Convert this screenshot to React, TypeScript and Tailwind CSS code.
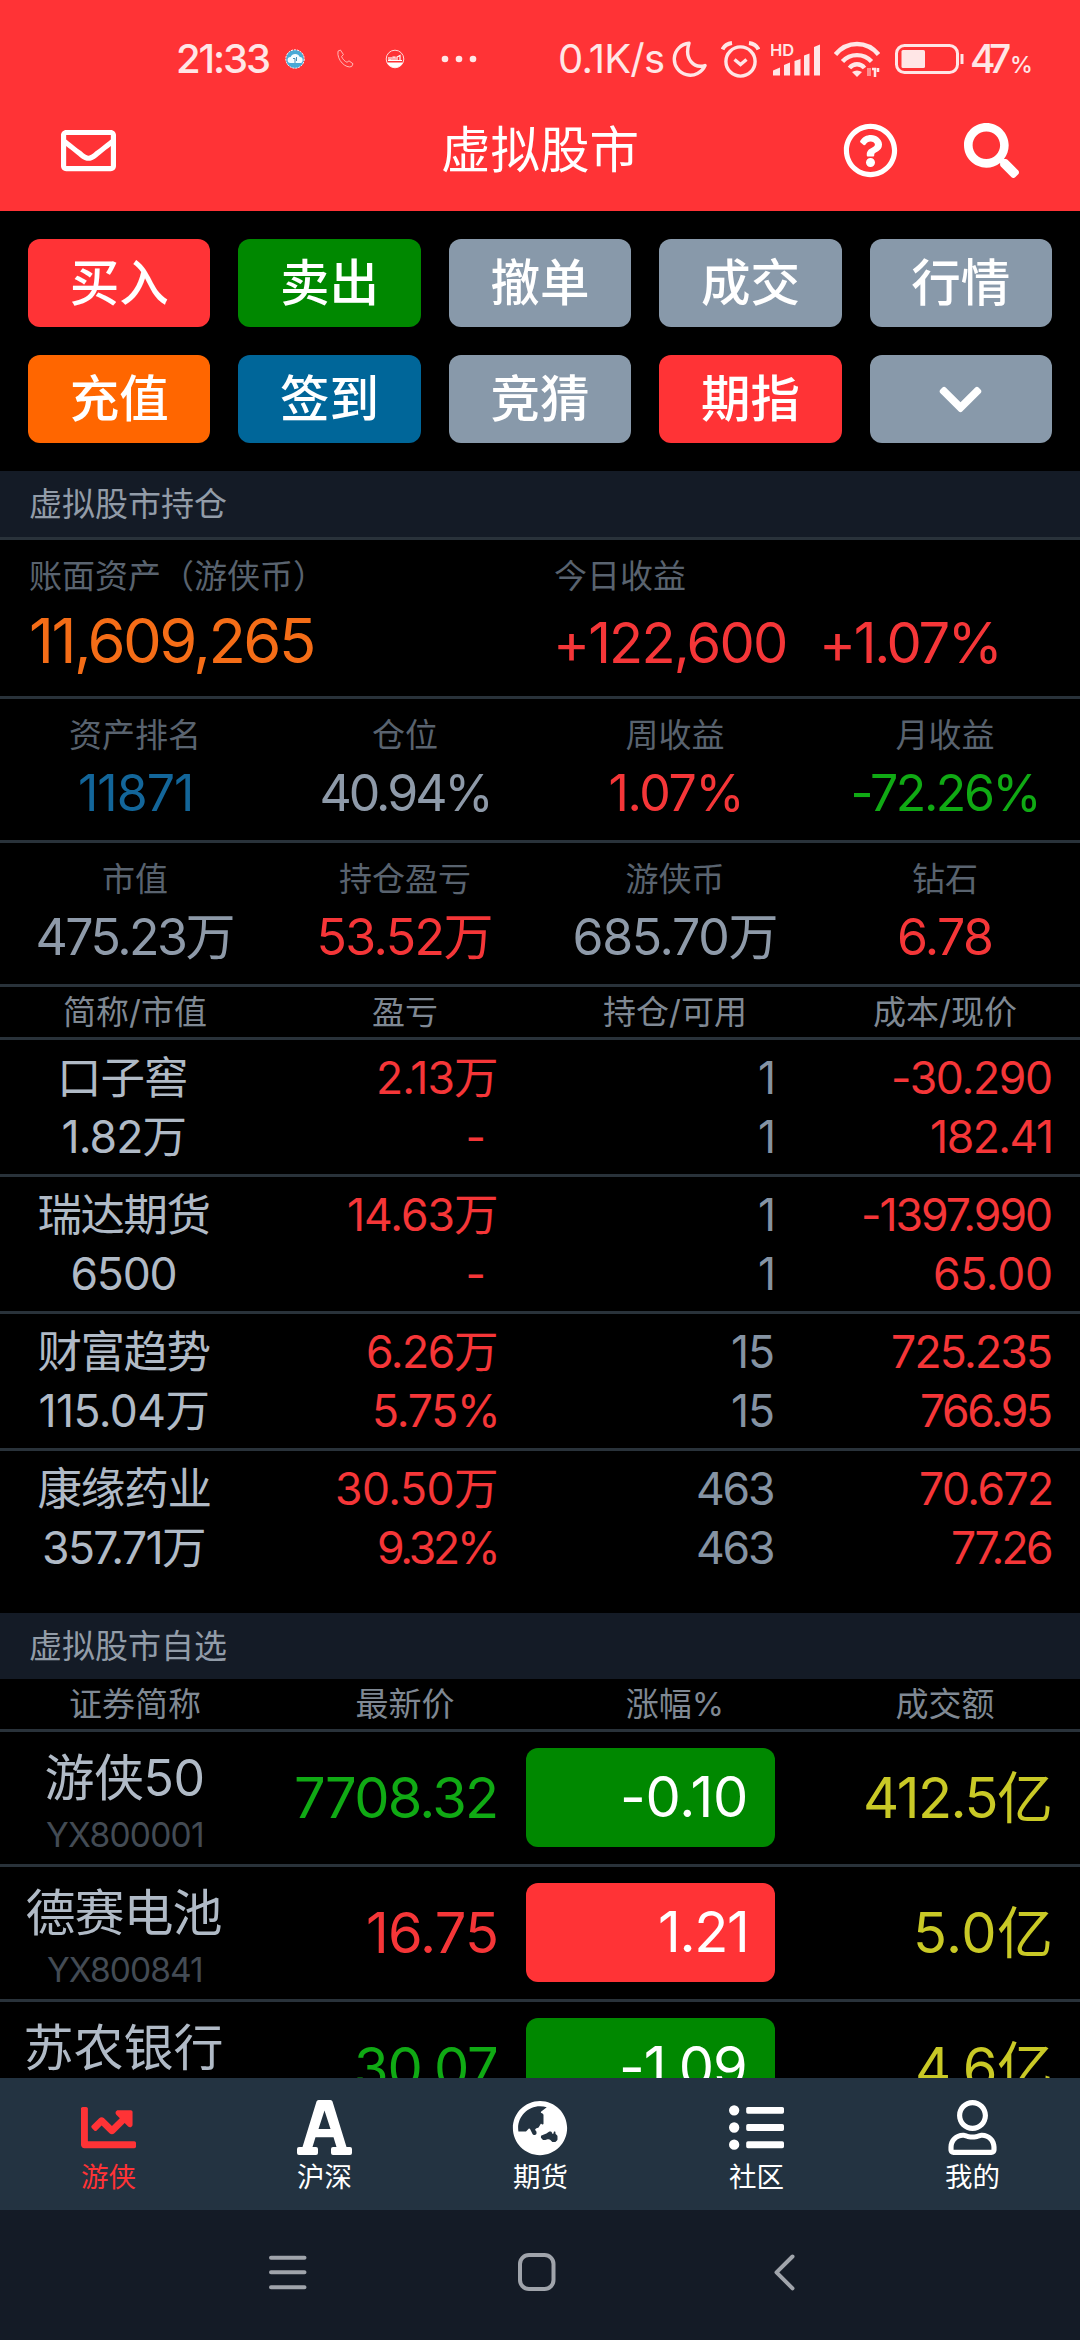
import { useLayoutEffect, useRef, useState, type CSSProperties, type ReactNode } from 'react';
import {
  FaChartLine,
  FaChevronDown,
  FaGlobeAsia,
  FaListUl,
  FaRegEnvelope,
  FaRegQuestionCircle,
  FaRegUser,
  FaSearch,
} from 'react-icons/fa';

/** Text whose tracking is adjusted so that its visible ink spans exactly `w` pixels. */
function Fit({ w, children, className = '' }: { w: number; children: string; className?: string }) {
  const ref = useRef<HTMLSpanElement>(null);
  const [style, setStyle] = useState<CSSProperties>({ letterSpacing: 0.01 });
  useLayoutEffect(() => {
    const el = ref.current;
    const ctx = document.createElement('canvas').getContext('2d');
    if (!el || !ctx) return;
    const cs = getComputedStyle(el);
    ctx.font = `${cs.fontWeight} ${cs.fontSize} ${cs.fontFamily}`;
    const m = ctx.measureText(children);
    const left = -m.actualBoundingBoxLeft;
    const right = m.width - m.actualBoundingBoxRight;
    const advance = el.getBoundingClientRect().width;
    const gap = children.length > 1 ? (w - (advance - left - right)) / (children.length - 1) : 0;
    setStyle({ letterSpacing: gap, marginLeft: -left, marginRight: -right - gap });
  }, [children, w]);
  return (
    <span ref={ref} style={style} className={`inline-block shrink-0 whitespace-nowrap ${className}`}>
      {children}
    </span>
  );
}

const RED = 'text-[#f53638]';
const GREEN = 'text-[#10aa14]';
const GRAY = 'text-[#8e9aa9]';

type Cell = [text: string, width: number];

const actions: { label?: string; bg: string }[] = [
  { label: '买入', bg: 'bg-[#ff3336]' },
  { label: '卖出', bg: 'bg-[#008800]' },
  { label: '撤单', bg: 'bg-[#8899aa]' },
  { label: '成交', bg: 'bg-[#8899aa]' },
  { label: '行情', bg: 'bg-[#8899aa]' },
  { label: '充值', bg: 'bg-[#ff6600]' },
  { label: '签到', bg: 'bg-[#006699]' },
  { label: '竞猜', bg: 'bg-[#8899aa]' },
  { label: '期指', bg: 'bg-[#ff3336]' },
  { bg: 'bg-[#8899aa]' },
];

const stats: { label: string; value: Cell; color: string }[][] = [
  [
    { label: '资产排名', value: ['11871', 110], color: 'text-[#13669a]' },
    { label: '仓位', value: ['40.94%', 167], color: GRAY },
    { label: '周收益', value: ['1.07%', 129], color: RED },
    { label: '月收益', value: ['-72.26%', 183], color: GREEN },
  ],
  [
    { label: '市值', value: ['475.23万', 195], color: GRAY },
    { label: '持仓盈亏', value: ['53.52万', 171], color: RED },
    { label: '游侠币', value: ['685.70万', 201], color: GRAY },
    { label: '钻石', value: ['6.78', 92], color: RED },
  ],
];

const holdings: { name: Cell; worth: Cell; gain: Cell; pct?: Cell; qty: Cell; cost: Cell; price: Cell }[] = [
  { name: ['口子窖', 124], worth: ['1.82万', 121], gain: ['2.13万', 117], qty: ['1', 12], cost: ['-30.290', 157], price: ['182.41', 119] },
  { name: ['瑞达期货', 171], worth: ['6500', 103], gain: ['14.63万', 147], qty: ['1', 12], cost: ['-1397.990', 187], price: ['65.00', 116] },
  { name: ['财富趋势', 171], worth: ['115.04万', 167], gain: ['6.26万', 128], pct: ['5.75%', 121], qty: ['15', 40], cost: ['725.235', 158], price: ['766.95', 129] },
  { name: ['康缘药业', 171], worth: ['357.71万', 160], gain: ['30.50万', 159], pct: ['9.32%', 117], qty: ['463', 75], cost: ['70.672', 130], price: ['77.26', 98] },
];

const watch: { name: Cell; code?: Cell; price: Cell; change: Cell; up: boolean; priceUp: boolean; amount: Cell }[] = [
  { name: ['游侠50', 157], code: ['YX800001', 156], price: ['7708.32', 200], change: ['-0.10', 122], up: false, priceUp: false, amount: ['412.5亿', 184] },
  { name: ['德赛电池', 195], code: ['YX800841', 154], price: ['16.75', 128], change: ['1.21', 85], up: true, priceUp: true, amount: ['5.0亿', 133] },
  { name: ['苏农银行', 195], price: ['30.07', 139], change: ['-1.09', 123], up: false, priceUp: false, amount: ['4.6亿', 132] },
];

function StatusBar() {
  return (
    <div className="flex h-[89px] items-center pt-[29px] text-[#ffe6e6]">
      <div className="ml-[178px] flex w-[91px] shrink-0 text-[40px] font-medium leading-[60px]">
        <Fit w={91}>21:33</Fit>
      </div>
      <svg className="ml-4 shrink-0" width="20" height="20" viewBox="0 0 20 20">
        <circle cx="10" cy="10" r="9.2" fill="#4aa9d6" stroke="#fff" strokeWidth="1" strokeDasharray="2 1" />
        <path d="M5.5 14h9a3 3 0 0 0 .3-6A5 5 0 0 0 5.6 8a3 3 0 0 0-.1 6z" fill="#f4fbff" />
        <path d="M8 9.5h2V14M11.5 8v4" stroke="#4a8fb5" strokeWidth="1" fill="none" />
      </svg>
      <svg className="ml-[30px] shrink-0" width="20" height="20" viewBox="0 0 20 20" fill="none" stroke="#ffc4c4" strokeWidth=".9">
        <path d="M3 2.2 5.4 1l3 4.5L6.6 7.6c.8 2.2 3 4.7 5.4 5.7l2-1.5 4 3-1.3 2.7C11 20 1.5 11 3 2.2z" />
      </svg>
      <svg className="ml-[30px] shrink-0" width="20" height="20" viewBox="0 0 20 20">
        <circle cx="10" cy="10" r="8.8" fill="none" stroke="#ffd8d8" strokeWidth="1" />
        <path d="M2 13.5h16a8.8 8.8 0 0 1-16 0z" fill="#fff" />
        <path d="M4 8v3h2V8m2 3V8h2v3m2 0V8l3-1.500V11M3 11.500h14" fill="none" stroke="#fff" strokeWidth="1.2" />
      </svg>
      <svg className="ml-9 shrink-0" width="36" height="8" viewBox="0 0 36 8" fill="currentColor">
        <circle cx="4" cy="4" r="3.3" />
        <circle cx="18" cy="4" r="3.3" />
        <circle cx="32" cy="4" r="3.3" />
      </svg>
      <div className="ml-[83px] flex w-[104px] shrink-0 text-[40px] leading-[60px]">
        <Fit w={104}>0.1K/s</Fit>
      </div>
      <svg className="ml-2 shrink-0" width="35" height="37" viewBox="0 0 35 37" fill="none" stroke="currentColor" strokeWidth="3.4" strokeLinejoin="round">
        <path d="M17 2.2A16 16 0 1 0 33 24.5C22 28 12 18 17 2.2z" />
      </svg>
      <svg className="ml-[14px] shrink-0" width="39" height="37" viewBox="0 0 39 37" fill="none" stroke="currentColor" strokeWidth="3.4">
        <circle cx="19.5" cy="20.5" r="14.6" />
        <path d="m13.500 18.500 6 5 6-5" />
        <path d="M1.500 8.500Q4 3 11 2M37.500 8.500Q35 3 28 2" strokeWidth="4" />
      </svg>
      <svg className="ml-[11px] shrink-0" width="50" height="37" viewBox="0 0 50 37" fill="currentColor">
        <text x="-1" y="15" fontSize="16.5" fontWeight="600" fontFamily="Inter, sans-serif">HD</text>
        <path d="m2 29.500 7-3v8H2zM13 24l6-2.500v13h-6zM23.500 20l6-2v16.500h-6zM33 14.500l5.500-2v22H33zM43 6l6-2.500v31h-6z" />
      </svg>
      <svg className="ml-[13px] shrink-0" width="46" height="37" viewBox="0 0 46 37" fill="none" stroke="currentColor" strokeWidth="4.4">
        <path d="M1.500 13.500C13-.5 33-.5 44.500 13.500M8.500 20.500C16 12 30 12 37.500 20.500M15.500 27c4-5 11-5 15 0" />
        <path d="M18 31q5-3 10 0l-5 5z" fill="currentColor" stroke="none" />
        <path d="M35 27v8" strokeWidth="4" stroke="#ff8d8d" />
        <path d="M38 28h3v8M44 27v4" strokeWidth="2.5" />
      </svg>
      <svg className="ml-[15px] shrink-0" width="69" height="32" viewBox="0 0 69 32" fill="none" stroke="currentColor" strokeWidth="3">
        <rect x="1.5" y="2.5" width="61" height="27" rx="8" />
        <rect x="6.5" y="7" width="23.5" height="18" rx="1.5" fill="currentColor" stroke="none" />
        <path d="M67 11v10" />
      </svg>
      <div className="ml-2 flex w-[38px] shrink-0 text-[39px] font-medium leading-[60px]">
        <Fit w={38}>47</Fit>
      </div>
      <div className="ml-0.5 flex w-[19px] shrink-0 pt-[11px] text-[23px] font-medium leading-[60px]">
        <Fit w={19}>%</Fit>
      </div>
    </div>
  );
}

function SectionTitle({ children, border }: { children: ReactNode; border?: boolean }) {
  return (
    <div className="shrink-0 bg-[#141b26]">
      <div className="h-[66px] pl-[29px] text-[33px] leading-[66px] text-[#929ca8]">{children}</div>
      {border && <div className="h-[3px] bg-[#29323a]" />}
    </div>
  );
}

function Columns({ labels, className }: { labels: string[]; className: string }) {
  return (
    <div className={`grid shrink-0 grid-cols-4 border-b-[3px] border-[#29323a] text-center text-[33px] text-[#7f8893] ${className}`}>
      {labels.map((l) => (
        <div key={l}>{l}</div>
      ))}
    </div>
  );
}

function Value({ cell }: { cell: Cell }) {
  return <Fit w={cell[1]}>{cell[0]}</Fit>;
}

function SerifTabIcon() {
  return (
    <svg width="55" height="55" viewBox="0 0 55 55" fill="currentColor" fillRule="evenodd">
      <path d="M21.500 0h12q1.500 0 2 1.500L49.500 47H53q2 0 2 2v4q0 2-2 2H36q-2 0-2-2v-4q0-2 2-2h3.500l-3-9.700h-18l-3 9.700H19q2 0 2 2v4q0 2-2 2H2q-2 0-2-2v-4q0-2 2-2h3.500L19.500 1.500Q20 0 21.500 0zM27.500 10.500l-6 18.500h12z" />
    </svg>
  );
}

export default function App() {
  const tabs = [
    { label: '游侠', icon: <FaChartLine size={55} />, color: 'text-[#ff3336]' },
    { label: '沪深', icon: <SerifTabIcon />, color: 'text-white' },
    { label: '期货', icon: <FaGlobeAsia size={56} />, color: 'text-white' },
    { label: '社区', icon: <FaListUl size={55} />, color: 'text-white' },
    { label: '我的', icon: <FaRegUser size={55} />, color: 'text-white' },
  ];
  return (
    <div className="flex h-[2340px] w-[1080px] flex-col overflow-hidden bg-black font-['Inter','Noto_Sans_CJK_SC',sans-serif]">
      <header className="h-[211px] shrink-0 bg-[#ff3336]">
        <StatusBar />
        <div className="grid h-[122px] grid-cols-[300px_1fr_300px] items-center text-white">
          <FaRegEnvelope size={55} className="ml-[61px]" />
          <h1 className="text-center text-[49.5px] font-normal leading-[60px]">虚拟股市</h1>
          <div className="flex items-center">
            <FaRegQuestionCircle size={55} className="ml-[63px]" />
            <FaSearch size={55} className="ml-[66px]" />
          </div>
        </div>
      </header>

      <main className="flex h-[1867px] shrink-0 flex-col overflow-hidden">
        <div className="grid shrink-0 grid-cols-5 gap-7 px-7 py-7">
          {actions.map((a, i) => (
            <button key={i} className={`flex h-[88px] items-center justify-center rounded-xl text-[49.5px] font-medium leading-[88px] text-white ${a.bg}`}>
              {a.label ?? <FaChevronDown size={49} />}
            </button>
          ))}
        </div>

        <SectionTitle border>虚拟股市持仓</SectionTitle>
        <div className="grid h-[159px] shrink-0 grid-cols-[554px_1fr] border-b-[3px] border-[#29323a] pt-4">
          <div className="pl-[29px]">
            <div className="text-[33px] leading-[40px] text-[#59636f]">账面资产（游侠币）</div>
            <div className="flex pl-[2px] pt-3 text-[61.5px] leading-[66px] text-[#f56d17]">
              <Fit w={282}>11,609,265</Fit>
            </div>
          </div>
          <div>
            <div className="text-[33px] leading-[40px] text-[#59636f]">今日收益</div>
            <div className={`flex gap-[39px] pl-[4px] pt-[14px] text-[56px] leading-[66px] ${RED}`}>
              <Fit w={227}>+122,600</Fit>
              <Fit w={173}>+1.07%</Fit>
            </div>
          </div>
        </div>

        {stats.map((row, i) => (
          <div key={i} className="grid h-36 shrink-0 grid-cols-4 border-b-[3px] border-[#29323a] pt-4 text-center">
            {row.map((s) => (
              <div key={s.label}>
                <div className="text-[33px] leading-[40px] text-[#59636f]">{s.label}</div>
                <div className={`pt-2 text-[50px] leading-[60px] ${s.color}`}>
                  <Value cell={s.value} />
                </div>
              </div>
            ))}
          </div>
        ))}

        <Columns labels={['简称/市值', '盈亏', '持仓/可用', '成本/现价']} className="h-[53px] leading-[50px]" />
        {holdings.map((h, i) => (
          <div
            key={h.name[0]}
            className={`grid h-[137px] shrink-0 grid-cols-[248px_248px_277px_278px] pt-[9px] text-[44.5px] leading-[59px] ${i < 3 ? 'border-b-[3px] border-[#29323a]' : 'mb-[25px]'}`}
          >
            <div className="text-center text-[#b0bac6]">
              <div><Value cell={h.name} /></div>
              <div><Value cell={h.worth} /></div>
            </div>
            <div className={`text-right ${RED}`}>
              <div><Value cell={h.gain} /></div>
              {h.pct ? <div><Value cell={h.pct} /></div> : <div className="pr-[10px]">-</div>}
            </div>
            <div className="text-right text-[#8593a3]">
              <div><Value cell={h.qty} /></div>
              <div><Value cell={h.qty} /></div>
            </div>
            <div className={`text-right ${RED}`}>
              <div><Value cell={h.cost} /></div>
              <div><Value cell={h.price} /></div>
            </div>
          </div>
        ))}

        <SectionTitle>虚拟股市自选</SectionTitle>
        <Columns labels={['证券简称', '最新价', '涨幅%', '成交额']} className="h-[53px] leading-[50px]" />
        {watch.map((s) => (
          <div key={s.name[0]} className="grid h-[135px] shrink-0 grid-cols-[248px_248px_279px_275px] border-b-[3px] border-[#29323a] text-[56px] leading-[132px]">
            <div className="pt-[15px] text-center">
              <div className="text-[50px] leading-[62px] text-[#b0bac6]"><Value cell={s.name} /></div>
              {s.code && <div className="pt-1 text-[33.5px] leading-[44px] text-[#434b54]"><Value cell={s.code} /></div>}
            </div>
            <div className={`text-right ${s.priceUp ? RED : GREEN}`}><Value cell={s.price} /></div>
            <div className={`my-4 ml-[30px] flex h-[99px] items-center justify-end rounded-xl pr-[30px] leading-[99px] text-white ${s.up ? 'bg-[#ff3336]' : 'bg-[#008800]'}`}>
              <Value cell={s.change} />
            </div>
            <div className="text-right text-[#c9c926]"><Value cell={s.amount} /></div>
          </div>
        ))}
      </main>

      <nav className="grid h-[132px] shrink-0 grid-cols-5 bg-[#233341]">
        {tabs.map((t) => (
          <div key={t.label} className={`flex flex-col items-center pt-[22px] ${t.color}`}>
            <div className="flex h-[55px] items-center">{t.icon}</div>
            <div className="pl-px pt-1 text-[27.5px] leading-[36px]">{t.label}</div>
          </div>
        ))}
      </nav>

      <div className="flex h-[130px] shrink-0 items-start bg-[#141b26] pt-[42px] text-[#a0a4ab]">
        <svg className="ml-[268px]" width="40" height="40" viewBox="0 0 40 40" stroke="currentColor" strokeWidth="4" strokeLinecap="round">
          <path d="M3 5.700h33.500M3 20.300h33.500M3 35.300h33.500" />
        </svg>
        <svg className="ml-[209px]" width="40" height="40" viewBox="0 0 40 40" fill="none" stroke="currentColor" strokeWidth="4">
          <rect x="3" y="3" width="33.5" height="34" rx="9" />
        </svg>
        <svg className="ml-[214px]" width="28" height="40" viewBox="0 0 28 40" fill="none" stroke="currentColor" strokeWidth="4" strokeLinecap="round" strokeLinejoin="round">
          <path d="M21.500 4.500 5.500 20.300l16 16" />
        </svg>
      </div>
    </div>
  );
}
